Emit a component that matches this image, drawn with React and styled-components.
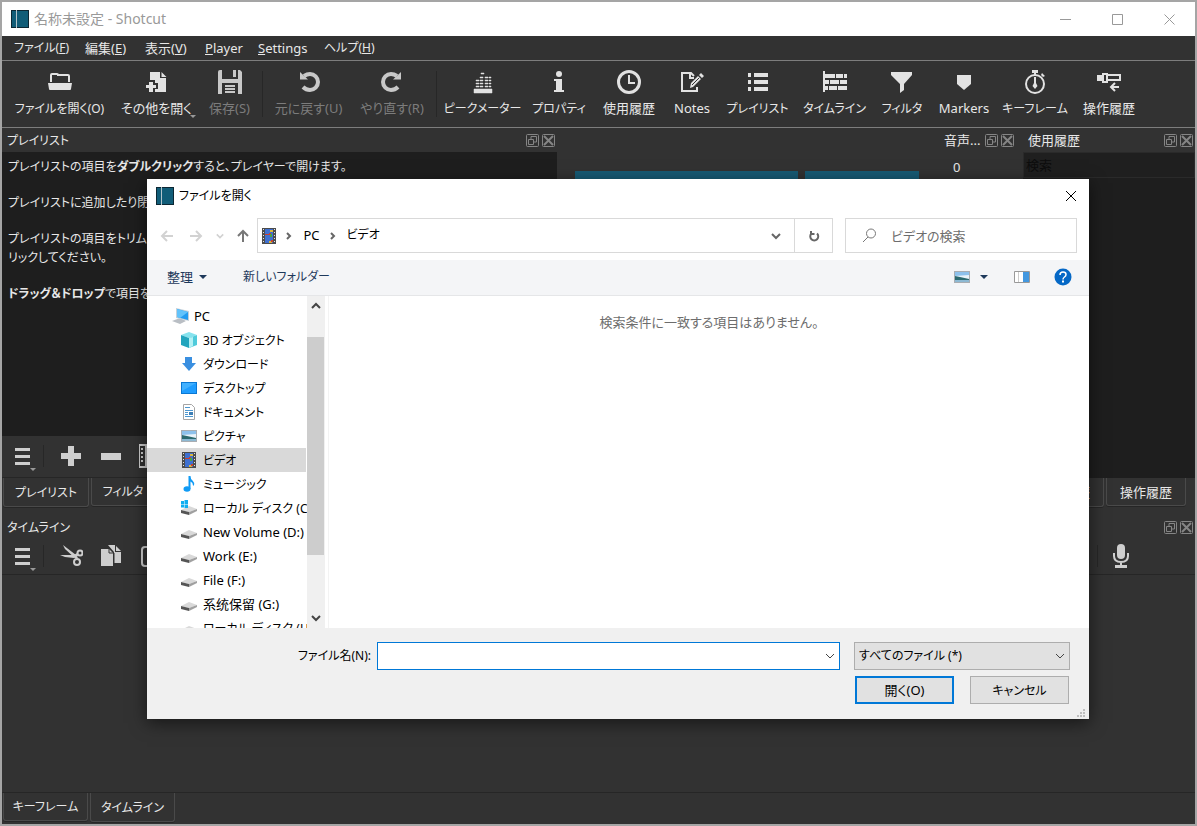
import React from "react";
import styled, { createGlobalStyle, css } from "styled-components";

const GlobalStyle = createGlobalStyle`
  *, *::before, *::after { box-sizing: border-box; }
  body { margin: 0; background: #a5a5a5; }
  body, button, input, select {
    font-family: "Noto Sans", "Noto Sans CJK JP", sans-serif;
    font-size: 13px;
    line-height: 18px;
    font-feature-settings: "palt";
  }
  button, input, select { padding: 0; border: 0; margin: 0; background: none; color: inherit; border-radius: 0; outline: none; }
  svg { display: block; flex: none; }
  p, ul { margin: 0; padding: 0; list-style: none; }
`;

/* Katakana labels are set one size down so that they stay compact beside Latin and kanji ones. */
const kanaSize = css`
  ${(p) => p.$kana && "font-size: 12px; line-height: 19px;"}
`;
const hasKana = (text) => /[ァ-ヶ]/.test(text);

/* ---------- window ---------- */
const Window = styled.div`
  position: relative;
  display: flex;
  flex-direction: column;
  min-height: 100vh;
  border: 2px solid #a5a5a5;
  background: #323232;
  color: #e8e8e8;
  overflow: hidden;
`;
const TitleBar = styled.header`
  display: flex;
  align-items: center;
  height: 34px;
  padding-left: 9px;
  background: #fff;
  color: #999;
  font-size: 14px;
`;
const TitleText = styled.span`
  flex: 1;
  margin-left: 5px;
  white-space: nowrap;
`;
const WindowButton = styled.button`
  display: flex;
  align-items: center;
  justify-content: center;
  width: 52px;
  height: 32px;
`;
const MenuBar = styled.nav`
  display: flex;
  align-items: center;
  gap: 16px;
  height: 25px;
  padding: 0 12px 1px;
  border-bottom: 1px solid #7d7d7d;
`;
const MenuItem = styled.button`
  white-space: nowrap;
  width: ${(p) => p.$w}px;
  text-align: left;
  ${kanaSize}
`;
const MainToolbar = styled.div`
  display: flex;
  align-items: center;
  height: 67px;
  padding-left: 4px;
  border-bottom: 1px solid #7d7d7d;
`;
const ToolButton = styled.button`
  position: relative;
  display: flex;
  flex-direction: column;
  align-items: center;
  gap: 5px;
  flex: none;
  width: ${(p) => p.$w}px;
  height: 60px;
  padding-top: 6px;
  white-space: nowrap;
  color: ${(p) => (p.disabled ? "#7c7c7c" : "#e8e8e8")};
  svg { color: ${(p) => (p.$dim ? "#c8c8c8" : "#e2e2e2")}; }
  ${kanaSize}
`;
const DropMark = styled.span`
  position: absolute;
  right: 4px;
  bottom: 6px;
  border: 3px solid transparent;
  border-top-color: #999;
  border-bottom: 0;
`;
const Separator = styled.span`
  flex: none;
  width: 1px;
  height: ${(p) => p.$h}px;
  margin: 0 ${(p) => p.$m}px;
  background: #272727;
`;

/* ---------- docks ---------- */
const DockArea = styled.main`
  display: flex;
`;
const Dock = styled.section`
  display: flex;
  flex-direction: column;
  min-width: 0;
  flex: ${(p) => p.$flex};
`;
const DockHeader = styled.div`
  display: flex;
  align-items: center;
  height: 24px;
  padding: 0 2px 0 5px;
  white-space: nowrap;
  ${kanaSize}
`;
const DockTitle = styled.span`
  flex: 1;
  overflow: hidden;
`;
const DockButton = styled.button`
  width: 13px;
  margin-left: 3px;
  color: #858585;
`;
const DarkPane = styled.div`
  height: ${(p) => p.$h}px;
  padding: ${(p) => p.$pad};
  background: #1e1e1e;
  display: flex;
  flex-direction: column;
  gap: 17px;
  font-size: 12px;
  p { line-height: 19px; white-space: nowrap; }
  b { font-weight: 600; }
`;
const PlayerBars = styled.div`
  display: flex;
  gap: 7px;
  padding: 43px 20px 0 18px;
`;
const PlayerBar = styled.div`
  flex: ${(p) => p.$flex};
  height: 24px;
  background: #175b75;
`;
const Level = styled.span`
  padding: 6px 0 0 14px;
`;
const HistoryDock = styled(Dock)`
  padding-left: 7px;
`;
const HistorySearch = styled.input`
  width: 100%;
  height: 26px;
  padding-left: 2px;
  background: #1f1f1f;
  border: 1px solid #2a2a2a;
  &::placeholder { color: #0d0d0d; opacity: 1; }
`;
const DockToolbar = styled.div`
  display: flex;
  align-items: center;
  height: ${(p) => p.$h}px;
  padding: 0 54px 2px 7px;
  border-bottom: 1px solid #262626;
  color: #cecece;
`;
const ToolGroup = styled.div`
  display: flex;
  align-items: center;
  min-width: 0;
  overflow: hidden;
`;
const IconButton = styled.button`
  position: relative;
  display: flex;
  align-items: center;
  justify-content: center;
  flex: none;
  width: ${(p) => p.$w || 40}px;
  height: 32px;
  ${DropMark} { right: 0; bottom: 1px; }
`;
const Push = styled.span`
  flex: 1;
`;
const TabRow = styled.div`
  display: flex;
  align-items: flex-start;
  gap: 2px;
  padding-left: 1px;
  height: ${(p) => p.$h}px;
`;
const Tab = styled.button`
  height: ${(p) => (p.$active ? 29 : 28)}px;
  width: ${(p) => p.$w}px;
  flex: none;
  border: 1px solid #4a4a4a;
  border-top: 0;
  border-radius: 0 0 3px 3px;
  box-shadow: 0 1px 0 #262626;
  white-space: nowrap;
  ${kanaSize}
`;
const TimelineCanvas = styled.div`
  flex: 1;
  min-height: 200px;
  border-bottom: 1px solid #262626;
`;

/* ---------- file dialog ---------- */
const Dialog = styled.div`
  position: absolute;
  top: 177px;
  left: 145px;
  right: 106px;
  background: #fff;
  color: #000;
  box-shadow: 0 4px 16px rgba(0, 0, 0, 0.55);
`;
const DialogTitle = styled.div`
  display: flex;
  align-items: center;
  gap: 5px;
  height: 33px;
  padding: 0 9px;
  font-size: 12px;
`;
const Grow = styled.span`
  flex: 1;
  white-space: nowrap;
`;
const PlainButton = styled.button`
  display: flex;
  align-items: center;
  justify-content: center;
  flex: none;
  width: ${(p) => p.$w}px;
`;
const NavRow = styled.div`
  display: flex;
  align-items: center;
  padding: 6px 12px 7px 6px;
`;
const AddressBar = styled.nav`
  flex: 1;
  display: flex;
  align-items: stretch;
  height: 35px;
  margin: 0 12px 0 1px;
  border: 1px solid #d9d9d9;
`;
const Crumb = styled.button`
  padding: 0 3px 2px;
  ${kanaSize}
`;
const Refresh = styled.button`
  display: flex;
  align-items: center;
  justify-content: center;
  width: 38px;
  border-left: 1px solid #d9d9d9;
`;
const SearchBox = styled.label`
  display: flex;
  align-items: center;
  gap: 14px;
  width: 232px;
  height: 35px;
  padding-left: 16px;
  border: 1px solid #d9d9d9;
  input { flex: 1; min-width: 0; }
  input::placeholder { color: #6d6d6d; opacity: 1; }
`;
const CommandBar = styled.div`
  display: flex;
  align-items: center;
  height: 36px;
  padding: 0 17px 2px 20px;
  background: #f4f5f7;
  border-bottom: 1px solid #e5e6e8;
  color: #1e395b;
`;
const Command = styled.button`
  display: flex;
  align-items: center;
  gap: ${(p) => p.$inner || 6}px;
  margin-right: ${(p) => p.$gap || 0}px;
  white-space: nowrap;
  ${kanaSize}
`;
const Caret = styled.span`
  border: 4px solid transparent;
  border-top-color: #1e395b;
  border-bottom: 0;
`;
const Browser = styled.div`
  display: flex;
  height: 332px;
`;
const Tree = styled.ul`
  width: 160px;
  padding-top: 8px;
  overflow: hidden;
`;
const TreeItem = styled.button`
  display: flex;
  align-items: center;
  gap: ${(p) => (p.$root ? 4 : 6)}px;
  width: 159px;
  height: 24px;
  padding-left: ${(p) => (p.$root ? 25 : 34)}px;
  white-space: nowrap;
  ${(p) => p.$selected && css`background: #d9d9d9;`}
  ${kanaSize}
`;
const ScrollBar = styled.div`
  display: flex;
  flex-direction: column;
  width: 18px;
  background: #f0f0f0;
`;
const ScrollArrow = styled.button`
  display: flex;
  align-items: center;
  justify-content: center;
  height: 20px;
`;
const ScrollTrack = styled.div`
  flex: 1;
  padding: 21px 1px 0 0;
`;
const ScrollThumb = styled.div`
  height: 218px;
  background: #cdcdcd;
`;
const FileList = styled.div`
  flex: 1;
  margin-left: 3px;
  padding-top: 17px;
  border-left: 1px solid #f3f3f3;
  text-align: center;
  color: #6d6d6d;
`;
const Footer = styled.div`
  position: relative;
  display: flex;
  flex-direction: column;
  gap: 6px;
  padding: 14px 19px 15px 148px;
  background: #f0f0f0;
`;
const FooterRow = styled.div`
  display: flex;
  align-items: center;
`;
const ButtonRow = styled(FooterRow)`
  justify-content: flex-end;
  gap: 16px;
  padding-right: 1px;
`;
const FileLabel = styled.label`
  width: 76px;
  margin-right: 6px;
  text-align: right;
  white-space: nowrap;
  font-size: 12px;
`;
const Combo = styled.span`
  position: relative;
  flex: ${(p) => p.$flex};
  display: flex;
  & + & { margin-left: 14px; }
  > svg { position: absolute; right: 5px; top: 9px; pointer-events: none; color: #555; }
`;
const FileInput = styled.input`
  flex: 1;
  min-width: 0;
  height: 28px;
  padding: 0 24px 0 5px;
  background: #fff;
  border: 1px solid #0078d7;
`;
const TypeSelect = styled.select`
  appearance: none;
  width: 100%;
  height: 28px;
  padding: 0 24px 0 4px;
  background: #e1e1e1;
  border: 1px solid #adadad;
  font-size: 12px;
`;
const DialogButton = styled.button`
  width: 99px;
  height: 28px;
  background: #e1e1e1;
  border: ${(p) => (p.$primary ? "2px solid #0078d7" : "1px solid #adadad")};
  ${kanaSize}
`;
const Grip = styled.svg`
  position: absolute;
  right: 4px;
  bottom: 2px;
`;

/* ---------- icons ---------- */
const Svg = ({ w = 24, h = w, box, children, ...rest }) => (
  <svg width={w} height={h} viewBox={box || `0 0 ${w} ${h}`} fill="currentColor" aria-hidden="true" {...rest}>{children}</svg>
);
const line = (width) => ({ fill: "none", stroke: "currentColor", strokeWidth: width });

const Logo = () => (
  <Svg w={18}>
    <path fill="#0c2733" d="M0 0h18v18H0z" />
    <path fill="#115d78" d="M1 1h4v16H1zM6 1h11v16H6z" />
    <path fill="#b5c5cc" d="M5 0h1v18H5z" />
  </Svg>
);
const icons = {
  open: <><path {...line(2)} d="M3 12V5q0-1 1-1h5q1 0 1 1v0h10q1 0 1 1v6" /><path d="M0 13h24l-1 6q0 1-1 1H2q-1 0-1-1z" /></>,
  other: <><path d="M5 2h10v6h6v14H10v-3h3v-6h-3v-3H5z" /><path d="M16.500 2l5 5h-5zM4 12h4v3h3v3H8v4H4v-4H1v-3h3z" /></>,
  save: <><path d="M0 2q0-2 2-2h2v9h16V0h2l2 2v22h-4v-11H4v11H0z" /><path d="M15 0h3v7h-3zM7 15h10v2H7zM7 18h10v2H7zM7 21h10v2H7z" /></>,
  undo: <><path {...line(4)} d="M7 6Q10 4 13 4a7.500 7.500 0 0 1 0 16Q9 20 6 17" /><path d="M3 2l8 7.500H3z" /></>,
  redo: <><path {...line(4)} d="M17 6Q14 4 11 4a7.500 7.500 0 0 0 0 16q4 0 7-3" /><path d="M21 2l-8 7.500h8z" /></>,
  peak: <path d="M3 19h18v4H3zM5 16h3v1H5zM5 13h3v1H5zM5 10h3v1H5zM9 16h3v1H9zM9 13h3v1H9zM9 10h3v1H9zM9 7h3v1H9zM10 3h3v1h-3zM14 16h3v1h-3zM14 13h3v1h-3zM14 10h3v1h-3zM14 7h3v1h-3zM18 16h2v1h-2zM18 13h2v1h-2zM18 10h2v1h-2zM18 7h2v1h-2z" stroke="currentColor" strokeWidth=".5" />,
  info: <><circle cx="12" cy="4" r="3" /><path d="M7 9h8v11h2v2H7v-2h2v-9H7z" /></>,
  clock: <><circle cx="12" cy="12" r="10.500" {...line(3)} /><path {...line(2)} d="M12 5v8h6" /></>,
  notes: <><path {...line(2)} d="M17 17v4H2V3h9l3 3M10 3v5h4" /><path d="M10 18l1-5 7-7 3 3-8 8zM19 5l2-2 3 3-2 2z" /><path stroke="#323232" d="M12 15l7-7" /></>,
  list: <path d="M2 3h3v4H2zM8 3h14v4H8zM2 10h3v4H2zM8 10h14v4H8zM2 17h3v4H2zM8 17h14v4H8z" />,
  timeline: <path d="M0 1h2v21H0zM2 4h10v4H2zM13 4h7v4h-7zM21 4h3v4h-3zM2 10h4v4H2zM7 10h9v4H7zM17 10h7v4h-7zM2 16h3v4H2zM6 16h8v4H6zM15 16h9v4h-9z" />,
  filter: <path d="M1 2h21v3l-8 9v6l-4 3v-9L1 5z" />,
  marker: <path d="M5 5h14v9l-7 6-7-6z" />,
  stop: <><circle cx="12" cy="14" r="9" {...line(2)} /><path d="M9 0h6v3h-2v3h-2V3H9zM11 7h2v6l1.500 3L12 19l-2.500-3 1.500-3zM19 3l3 3-2 1-2-2z" /></>,
  history: <><path d="M0 5h5v6H0z" /><path {...line(2)} d="M6 4h4v8H6zM10 5h13v5H10zM22 17h-8M18 13l-4 4 4 4" /></>,
  menu: <path d="M4 4h15v3H4zM4 11h15v3H4zM4 18h15v3H4z" />,
  plus: <path d="M9 2h6v7h7v6h-7v7H9v-7H2V9h7z" />,
  minus: <path d="M2 9h20v7H2z" />,
  film: <><path {...line(2)} d="M0 1h22v22H0z" /><path d="M2 4h2v2H2zM2 8h2v2H2zM2 12h2v2H2zM2 16h2v2H2zM6 2h2v20H6z" /></>,
  cut: <><path d="M4 1l13 10 2 3-2 1L6 5zM1 11h14l3-2 1 3-4 2-9-1z" /><circle cx="21" cy="9" r="2.500" {...line(2)} /><circle cx="18" cy="18" r="3" {...line(2)} /></>,
  copy: <><path d="M2 5h8l4 4v13H2zM9 1h7v7h6v11h-7V8z" /><path d="M17 2l5 5h-5z" /><path stroke="#323232" fill="none" d="M10 4v5h5v12" /></>,
  paste: <rect x="3" y="3" width="18" height="19" rx="3" {...line(2)} />,
  mic: <><rect x="8" y="0" width="8" height="15" rx="4" /><path {...line(2)} d="M5 9v3q0 6 7 6t7-6V9M12 18v4" /><path d="M6 21h12v3H6z" /></>,
};
const Icon = ({ name }) => <Svg>{icons[name]}</Svg>;

const FloatIcon = () => <Svg w={13}><rect x=".5" y=".5" width="12" height="12" rx="1" {...line(1)} /><path {...line(1)} d="M5 5V2.500h5.500V8H8M2.500 5.500h5v5h-5z" /></Svg>;
const CloseIcon = () => <Svg w={13}><rect x=".5" y=".5" width="12" height="12" rx="1" {...line(1)} /><path {...line(2)} d="M2 2l9 9M11 2l-9 9" /></Svg>;
const Chevron = ({ dir = "down", size = 10, color = "#666", width = 2 }) => {
  const d = { down: "M1 3l4 4 4-4", up: "M1 7l4-4 4 4", right: "M3 2l3 3-3 3" }[dir];
  return <Svg w={size} box="0 0 10 10"><path d={d} fill="none" stroke={color} strokeWidth={width} /></Svg>;
};
const VideoIcon = () => (
  <Svg w={14} h={16}>
    <path fill="#4c4c4c" d="M0 0h14v16H0z" /><path fill="#3f70d0" d="M3 1h8v14H3z" />
    <path fill="#e4e4e4" d="M1 1h1v1H1zM1 4h1v1H1zM1 7h1v1H1zM1 10h1v1H1zM1 13h1v1H1zM12 1h1v1h-1zM12 4h1v1h-1zM12 7h1v1h-1zM12 10h1v1h-1zM12 13h1v1h-1z" />
    <path fill="#d9b83a" d="M8 2h3v2H8zM7 13h3v2H7z" /><path fill="#c9402f" d="M3 6h4V5h2v2H3zM9 12h2v2H9z" /><path fill="#4aa545" d="M8 6h2v3H8z" />
  </Svg>
);
const PictureIcon = () => (
  <Svg w={16} h={12}>
    <path fill="#a9adb2" d="M0 0h16v12H0z" /><path fill="#eaf3fa" d="M1 1h14v10H1z" /><path fill="#8ec1ec" d="M1 1h14v3L1 5z" />
    <path fill="#2c6a70" d="M1 5l5 1 9 2v1H1z" /><path fill="#8db9d3" d="M1 9h14v2H1z" />
  </Svg>
);
const Disk = () => <><path fill="#d9d9d9" d="M0 10l8-4 8 3-8 3z" /><path fill="#555" d="M0 10l8 2v3l-8-2z" /><path fill="#a0a0a0" d="M8 12l8-3v2l-8 4z" /></>;
const treeIcons = {
  pc: <Svg w={18} h={16}><path fill="#b9bec4" d="M0 13l8-3 6 3-6 3z" /><path fill="#c5d0d9" d="M4 0l13 3v10L4 10z" /><path fill="#249cf0" d="M5 1l11 3v8L5 9z" /><path fill="#62c3fb" d="M5 1l11 3-8 6-3-1z" /></Svg>,
  cube: <Svg w={16}><path fill="#86e3ee" d="M8 0l8 3-8 3-8-3z" /><path fill="#22a5bd" d="M0 3l8 3v10l-8-3z" /><path fill="#4fcbdb" d="M16 3L8 6v10l8-3z" /><path fill="#b5f1f5" d="M8 6l4-1v9l-4 2z" /></Svg>,
  down: <Svg w={16}><path fill="#3a8fe0" d="M4 1h7v6h4l-7 8-7-8h3z" /></Svg>,
  desktop: <Svg w={16}><path fill="#0a78d4" d="M0 2h16v12H0z" /><path fill="#1f9dff" d="M1 3h14v10H1z" /><path fill="#42b1ff" d="M1 3h14L1 11z" /></Svg>,
  doc: <Svg w={16}><path fill="#fff" stroke="#a5a5a5" d="M2.500.5h8l3 3v12h-11z" /><path stroke="#4d97cf" d="M4 3.500h5M4 6.500h8M4 8.500h3M4 10.500h3M4 12.500h8" /><path fill="#3d7fb6" d="M8 8h4v3H8z" /></Svg>,
  pic: <PictureIcon />,
  video: <Svg w={16} box="-1 0 16 16"><VideoIcon /></Svg>,
  music: <Svg w={16}><ellipse cx="6" cy="13" rx="3.500" ry="2.800" fill="#109bf5" /><path fill="#109bf5" d="M7.500 0h2q0 3 2 4.500t1.500 5h-1q0-3-2.500-4V13h-2z" /></Svg>,
  disk: <Svg w={16}><Disk /></Svg>,
  sys: <Svg w={16}><Disk /><path fill="#10aef0" d="M0 1h3v3H0zM3.500 0H7v4H3.500zM0 4.500h3v3H0zM3.500 4.500H7V8H3.500z" /></Svg>,
};

/* ---------- data ---------- */
const menus = [["ファイル", "F", 55], ["編集", "E", 44], ["表示", "V", 44], ["", "Player", 37], ["", "Settings", 50], ["ヘルプ", "H", 54]];
const tools = [
  ["open", "ファイルを開く(O)", 107], ["other", "その他を開く", 87, { drop: true }], ["save", "保存(S)", 59, { off: true }], "sep",
  ["undo", "元に戻す(U)", 85, { off: true }], ["redo", "やり直す(R)", 82, { off: true }], "sep",
  ["peak", "ピークメーター", 85], ["info", "プロパティ", 68], ["clock", "使用履歴", 72], ["notes", "Notes", 54], ["list", "プレイリスト", 77],
  ["timeline", "タイムライン", 77], ["filter", "フィルタ", 58], ["marker", "Markers", 66], ["stop", "キーフレーム", 76], ["history", "操作履歴", 72],
];
const places = [
  ["pc", "PC"], ["cube", "3D オブジェクト"], ["down", "ダウンロード"], ["desktop", "デスクトップ"], ["doc", "ドキュメント"], ["pic", "ピクチャ"],
  ["video", "ビデオ"], ["music", "ミュージック"], ["sys", "ローカル ディスク (C"], ["disk", "New Volume (D:)"], ["disk", "Work (E:)"],
  ["disk", "File (F:)"], ["disk", "系统保留 (G:)"], ["disk", "ローカル ディスク (H"],
];

const Header = ({ children }) => (
  <DockHeader $kana={hasKana(children)}>
    <DockTitle>{children}</DockTitle>
    <DockButton aria-label="フロート"><FloatIcon /></DockButton>
    <DockButton aria-label="閉じる"><CloseIcon /></DockButton>
  </DockHeader>
);

function OpenDialog() {
  return (
    <Dialog role="dialog" aria-label="ファイルを開く">
      <DialogTitle>
        <Logo />
        <Grow>ファイルを開く</Grow>
        <PlainButton $w={18} aria-label="閉じる"><Svg w={12}><path {...line(1)} d="M1 1l10 10M11 1L1 11" /></Svg></PlainButton>
      </DialogTitle>
      <NavRow>
        <PlainButton $w={28} aria-label="戻る"><Svg w={14}><path stroke="#d2d2d2" strokeWidth="2" fill="none" d="M13 7H2M7 2L2 7l5 5" /></Svg></PlainButton>
        <PlainButton $w={30} aria-label="進む"><Svg w={14}><path stroke="#d2d2d2" strokeWidth="2" fill="none" d="M1 7h11M7 2l5 5-5 5" /></Svg></PlainButton>
        <PlainButton $w={18} aria-label="最近の場所"><Chevron size={8} color="#d2d2d2" /></PlainButton>
        <PlainButton $w={27} aria-label="上へ"><Svg w={14}><path stroke="#777" strokeWidth="2" fill="none" d="M7 13V2M2 7l5-5 5 5" /></Svg></PlainButton>
        <AddressBar>
          <PlainButton $w={22} aria-label="場所"><VideoIcon /></PlainButton>
          <PlainButton $w={17} aria-label="展開"><Chevron dir="right" /></PlainButton>
          <Crumb>&nbsp;PC</Crumb>
          <PlainButton $w={21} aria-label="展開"><Chevron dir="right" /></PlainButton>
          <Crumb $kana>ビデオ</Crumb>
          <Grow />
          <PlainButton $w={36} aria-label="履歴"><Chevron /></PlainButton>
          <Refresh aria-label="更新"><Svg w={12}><path stroke="#666" strokeWidth="2" fill="none" d="M9 3.500a4 4 0 1 1-5.500 0M3 1v3h3.500" /></Svg></Refresh>
        </AddressBar>
        <SearchBox>
          <Svg w={15}><circle cx="9" cy="5.500" r="4.500" stroke="#777" fill="none" /><path stroke="#777" d="M6 9l-5 5" /></Svg>
          <input placeholder="ビデオの検索" aria-label="ビデオの検索" />
        </SearchBox>
      </NavRow>
      <CommandBar>
        <Command $gap={36}>整理<Caret /></Command>
        <Command $kana>新しいフォルダー</Command>
        <Grow />
        <Command $gap={26} $inner={10} aria-label="表示方法"><PictureIcon /><Caret /></Command>
        <Command $gap={24} aria-label="プレビュー"><Svg w={16} h={12}><path fill="#fff" stroke="#999" d="M.5.5h15v11H.5z" /><path stroke="#ccc" d="M4.500 1v10" /><path fill="#4398e0" d="M9 1h6v10H9z" /></Svg></Command>
        <Command aria-label="ヘルプ"><Svg w={18}><circle cx="9" cy="9" r="8.500" fill="#0568c6" /><path d="M6 7q0-3 3-3t3 2.500q0 1.500-1.500 2.500T9 11.500" stroke="#fff" strokeWidth="1.500" fill="none" /><path fill="#fff" d="M8 12.500h2v2H8z" /></Svg></Command>
      </CommandBar>
      <Browser>
        <Tree>
          {places.map(([icon, label], i) => (
            <li key={i}>
              <TreeItem $root={i === 0} $selected={icon === "video"} $kana={hasKana(label)}>{treeIcons[icon]}{label}</TreeItem>
            </li>
          ))}
        </Tree>
        <ScrollBar>
          <ScrollArrow aria-label="上"><Chevron dir="up" color="#444" /></ScrollArrow>
          <ScrollTrack><ScrollThumb /></ScrollTrack>
          <ScrollArrow aria-label="下"><Chevron color="#444" /></ScrollArrow>
        </ScrollBar>
        <FileList>検索条件に一致する項目はありません。</FileList>
      </Browser>
      <Footer>
        <FooterRow>
          <FileLabel htmlFor="file-name">ファイル名(N):</FileLabel>
          <Combo $flex="1"><FileInput id="file-name" /><Chevron width={1} color="#444" /></Combo>
          <Combo $flex="0 0 216px">
            <TypeSelect aria-label="ファイルの種類"><option>すべてのファイル (*)</option></TypeSelect>
            <Chevron width={1} color="#444" />
          </Combo>
        </FooterRow>
        <ButtonRow>
          <DialogButton $primary>開く(O)</DialogButton>
          <DialogButton $kana>キャンセル</DialogButton>
        </ButtonRow>
        <Grip width="8" height="8" fill="#bfbfbf"><path d="M6 0h2v2H6zM3 3h2v2H3zM6 3h2v2H6zM0 6h2v2H0zM3 6h2v2H3zM6 6h2v2H6z" /></Grip>
      </Footer>
    </Dialog>
  );
}

export default function App() {
  return (
    <>
      <GlobalStyle />
      <Window>
        <TitleBar>
          <Logo />
          <TitleText>名称未設定 - Shotcut</TitleText>
          <WindowButton aria-label="最小化"><Svg w={11}><path d="M0 5h11v1H0z" /></Svg></WindowButton>
          <WindowButton aria-label="最大化"><Svg w={11}><path {...line(1)} d="M.5.5h10v10H.5z" /></Svg></WindowButton>
          <WindowButton aria-label="閉じる"><Svg w={11}><path {...line(1)} d="M.5.5l10 10M10.500.5l-10 10" /></Svg></WindowButton>
        </TitleBar>
        <MenuBar>
          {menus.map(([jp, key, w]) => (
            <MenuItem key={key} $w={w} $kana={hasKana(jp)}>{jp ? <>{jp}(<u>{key}</u>)</> : <><u>{key[0]}</u>{key.slice(1)}</>}</MenuItem>
          ))}
        </MenuBar>
        <MainToolbar>
          {tools.map((t, i) => t === "sep" ? <Separator key={i} $h={46} $m={3} /> : (
            <ToolButton key={i} $w={t[2]} disabled={t[3]?.off} $dim={t[3]?.off} $kana={hasKana(t[1])}>
              <Icon name={t[0]} />{t[1]}{t[3]?.drop && <DropMark />}
            </ToolButton>
          ))}
        </MainToolbar>
        <DockArea>
          <Dock $flex="555 1 0">
            <Header>プレイリスト</Header>
            <DarkPane $h={284} $pad="5px 6px">
              <p>プレイリストの項目を<b>ダブルクリック</b>すると、プレイヤーで開けます。</p>
              <p>プレイリストに追加したり閉</p>
              <p>プレイリストの項目をトリム<br />リックしてください。</p>
              <p><b>ドラッグ＆ドロップ</b>で項目を</p>
            </DarkPane>
            <DockToolbar $h={42}>
              <ToolGroup>
                <IconButton $w={27} aria-label="メニュー"><Icon name="menu" /><DropMark /></IconButton>
                <Separator $h={22} $m={7} />
                <IconButton aria-label="追加"><Icon name="plus" /></IconButton>
                <IconButton aria-label="削除"><Icon name="minus" /></IconButton>
                <IconButton aria-label="更新"><Icon name="film" /></IconButton>
              </ToolGroup>
            </DockToolbar>
            <TabRow $h={37}>
              <Tab $w={86} $active $kana>プレイリスト</Tab>
              <Tab $w={64} $kana>フィルタ</Tab>
            </TabRow>
          </Dock>
          <Dock $flex="382 1 0">
            <PlayerBars><PlayerBar $flex="224" /><PlayerBar $flex="115" /></PlayerBars>
          </Dock>
          <Dock $flex="0 0 77px">
            <Header>音声...</Header>
            <Level>0</Level>
          </Dock>
          <HistoryDock $flex="0 0 179px">
            <Header>使用履歴</Header>
            <HistorySearch placeholder="検索" aria-label="検索" />
            <DarkPane $h={300} $pad="0" />
            <TabRow $h={37}>
              <Tab $w={80} $active>使用履歴</Tab>
              <Tab $w={80}>操作履歴</Tab>
            </TabRow>
          </HistoryDock>
        </DockArea>
        <Header>タイムライン</Header>
        <DockToolbar $h={36}>
          <ToolGroup>
            <IconButton $w={27} aria-label="メニュー"><Icon name="menu" /><DropMark /></IconButton>
            <Separator $h={22} $m={7} />
            <IconButton aria-label="切り取り"><Icon name="cut" /></IconButton>
            <IconButton aria-label="コピー"><Icon name="copy" /></IconButton>
            <IconButton aria-label="貼り付け"><Icon name="paste" /></IconButton>
          </ToolGroup>
          <Push />
          <Separator $h={22} $m={3} />
          <IconButton aria-label="録音"><Icon name="mic" /></IconButton>
        </DockToolbar>
        <TimelineCanvas />
        <TabRow $h={31}>
          <Tab $w={85} $kana>キーフレーム</Tab>
          <Tab $w={85} $active $kana>タイムライン</Tab>
        </TabRow>
        <OpenDialog />
      </Window>
    </>
  );
}
